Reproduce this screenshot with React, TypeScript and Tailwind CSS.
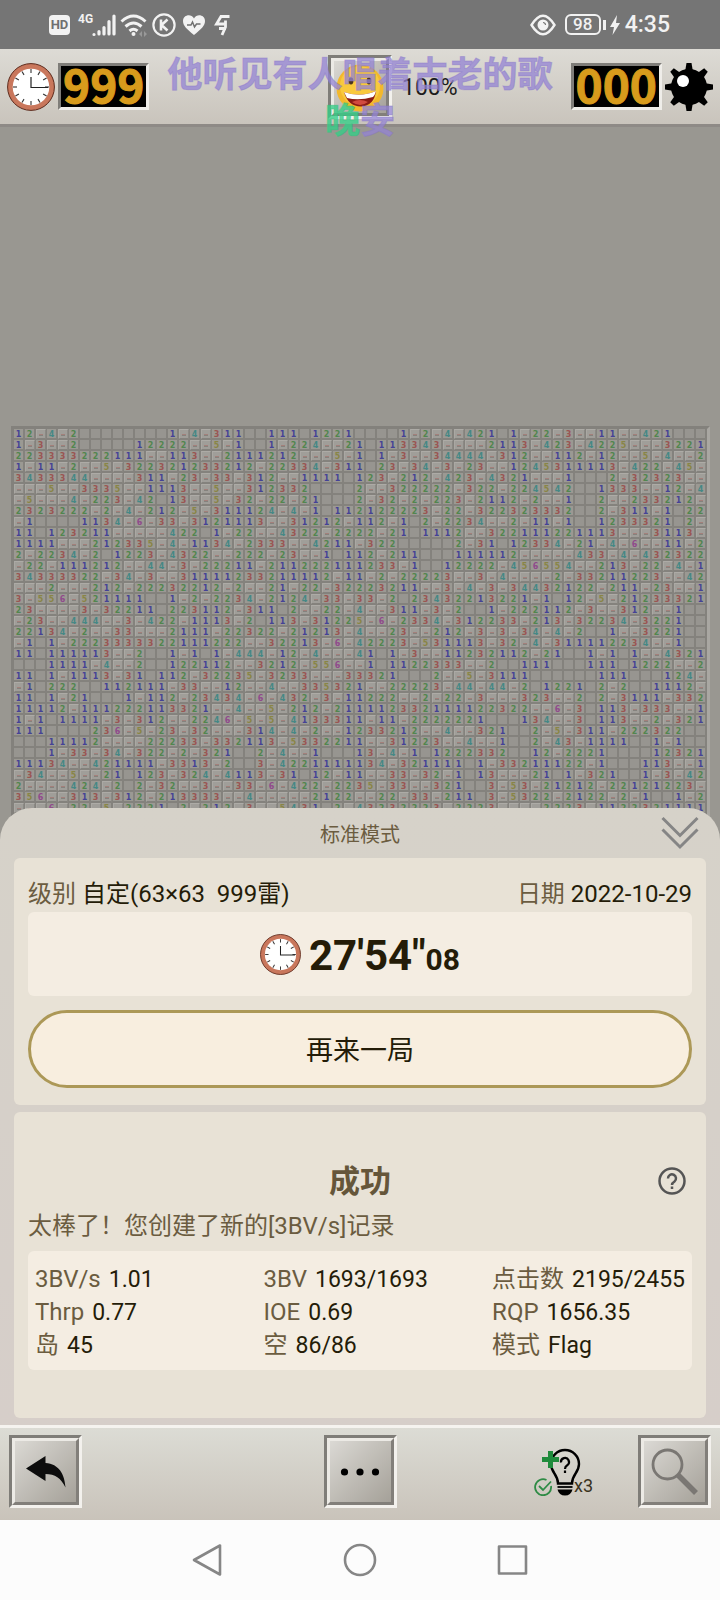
import type { ReactNode } from "react";

// "." opened blank, "f" flagged mine, digits are neighbour counts
const BOARD = [
  "12f4f2........1f4f311..111.1221....1f2f4f421.1f22f3ff11ff421...",
  "1f3ff2.....12222ff5f1..1f224ff21.113343ffff2113f423f4225fff3221",
  "223333222111ff113ff2111212fff5f1.1f3ff34444f312ff112f12ff5f4ff2",
  "1f11f2ff5f322321233212f22334f311.23f34f3f23ff1245311113f422f45f",
  "3433344ffff311f23f33f312ff1111.123f212f423f4321fff1...2f32323ff",
  "fff5ff3335ff1113ff5ff312332....2ff322222f322f224542..1333ff12f4",
  "f5fff4f223f42.13ff5f32f22f21...2f32f2f223f2112f2ff1..2ff233212f",
  "2323222f2f4f212f5f311124f4f1.112122223f22f322323332..2f311f1.22",
  "f1....1134f6f33f3121113ff31212f112f1.2f2234ff2f11f1..1233321.2f",
  "11.123211fffff422.1f22ff4322f2222f21.1112ff322111221113fff3113f",
  "1111fff212335f4f1134f2333ff4211f322.....2f31.12334f21f4f6ff11f2",
  "2f2234f2.1223f4322ff222f23ff1.112f211...111112fffff433f4f432322",
  "f22f111212ff44f3f22211f211222111233f1..12222f456554ff213f22f4f1",
  "34333322f34f3ff31111233211112f11f2f22223ff3f4ffff2f33211223ff42",
  "fff2fff212f22232212f2ff21f22f32223211ff3f4f3f34432122f211f23ff1",
  "3f556f521111..1f2f2234f2124f33f33f2.23432213221f1.12f5f21233321",
  "23ffff3f32211.223112f311.2ff22f4ff311f3f2..1f222112f3ff312ff1..",
  "f23ff444ff3f422f1113f2.113f31225f6f2334f312233f213f32234f3221..",
  "22134f2ff33fff2111f22322f21213f4ff23ff212f3f3f34f4f2..1ff3221..",
  "f1.1f2223333322111222ff32213f6f42223f531113f32f4f311112234ff1..",
  "11.111113ff2..1f1.1f444f12f4fff41.1f3ff11232112f21..1f1.1ff4321",
  "...1111f4ff2..122112ff3212f556ff1.1122333ff2..111...111.1222ff2",
  "11.1f1113f31.112f32235f3233fff33321...2ff5f3111......111...124f",
  "f1.222..112111f33ff12ff4ff335321ff22223f44f44f2.1221.2f2..1112f",
  "11.1f21...1f112f23434f6f432f3f11222ff2f22f3fff323ff2.2f3111f332",
  "11112f111222113321ff4ff5f212f211112332111122322ff6f3.113f333ff1",
  "1f1.1111f3f312ff2246f5f5f4133311f11f2222221...134ff3.113ff2f321",
  "111....236f5f23f32fff314f4f2ff1233212ff4ff321..2f5f311f222322..",
  "...11112ffff22233f332113f5332211ff31223ff4ff1..2f43f1111..1f1..",
  "...1f33f34f322f2f321..2f4ff1...13f4f1.1222332..12f2221....12321",
  "11134ff421111f3313f2..3f4221111134f321111.1f33211122f1...113ff1",
  "f34ff5ff21.123f324f4113f31.12f11ff33f32f1.13fff21.1f321..1f3f42",
  "2ffff424f2.2f32ff3ff33f6f422f2235f33ff321..3f53f21212f22121223f",
  "356ff313f312f213333ff4fffff2122ff22f33f211.3f5322f2122f2f1..1f2",
  "fff6f22f5f2221.2f212f3ff5431.2f43232223f2223ffff2223f1122321111",
];

const NUMBER_COLORS: Record<string, string> = {
  "1": "text-[#454296]",
  "2": "text-[#52864f]",
  "3": "text-[#9a5552]",
  "4": "text-[#458885]",
  "5": "text-[#898546]",
  "6": "text-[#904a8c]",
};

const STATS = [
  ["3BV/s", "1.01"],
  ["3BV", "1693/1693"],
  ["点击数", "2195/2455"],
  ["Thrp", "0.77"],
  ["IOE", "0.69"],
  ["RQP", "1656.35"],
  ["岛", "45"],
  ["空", "86/86"],
  ["模式", "Flag"],
];

const Cell = ({ value }: { value: string }) => {
  if (value === "f") {
    return (
      <span className="mr-px mb-px flex items-center justify-center border border-t-[#adaba6] border-r-[#8b8984] border-b-[#84827d] border-l-[#aaa8a3] bg-[#a09e99] pt-0.5">
        <span className="h-0.5 w-1 border-t border-t-[#a3807b] bg-[#84827d]" />
      </span>
    );
  }

  return (
    <span
      className={`mr-0.5 mb-0.5 text-center text-[8px] leading-[11px] ${
        value === "." ? "bg-[#979590]" : `bg-[#9b9993] ${NUMBER_COLORS[value]}`
      }`}
    >
      {value === "." ? "" : value}
    </span>
  );
};

const Board = () => (
  <div className="ml-[11px] mr-[10px] border-3 border-b-0 border-t-[#83817c] border-r-[#a9a7a2] border-l-[#83817c] bg-[#84827d] pb-5">
    {BOARD.map((row, y) => (
      <div
        key={y}
        className="grid grid-cols-[repeat(63,minmax(0,1fr))] grid-rows-[11px] font-['DejaVu_Sans',sans-serif] font-bold"
      >
        {row.split("").map((value, x) => (
          <Cell key={x} value={value} />
        ))}
      </div>
    ))}
  </div>
);

const Clock = ({ className }: { className: string }) => (
  <svg viewBox="0 0 48 48" className={className}>
    <circle cx="24" cy="24" r="23.4" fill="#c9775c" stroke="#5d2a1c" strokeWidth="1" />
    <circle cx="24" cy="24" r="18.3" fill="#fff" />
    {[0, 30, 60, 90, 120, 150, 180, 210, 240, 270, 300, 330].map((angle) => (
      <path key={angle} d="M24 6v4" stroke="#333" strokeWidth="1.1" transform={`rotate(${angle} 24 24)`} />
    ))}
    <path d="M24 14v10.5h17" fill="none" stroke="#222" strokeWidth="1.2" />
  </svg>
);

const Mine = () => (
  <svg viewBox="0 0 48 48" className="size-12">
    {[0, 45, 90, 135, 180, 225, 270, 315].map((angle) => (
      <path key={angle} d="M21.5 0h5l1.5 9h-8z" transform={`rotate(${angle} 24 24)`} />
    ))}
    <circle cx="24" cy="24" r="18" />
    <circle cx="18" cy="18" r="6" fill="#fff" />
  </svg>
);

const Face = () => (
  <svg viewBox="0 0 52 52" className="size-full">
    <circle cx="26" cy="27" r="23.5" fill="#f3b82c" />
    <circle cx="26" cy="25" r="20" fill="#fbd044" opacity=".7" />
    <ellipse cx="17" cy="20" rx="2.4" ry="3.4" fill="#4b3420" />
    <ellipse cx="35" cy="20" rx="2.4" ry="3.4" fill="#4b3420" />
    <path d="M10 31q16 6 32-1-2 15-15 15.500-13 0-17-14.500z" fill="#8c1c14" />
    <path d="M10 31q16 6 32-1-1 4-3 6-14 4-26 1z" fill="#fff" />
    <path d="M18 41q8-4 16 0-8 6-16 0z" fill="#d24a3f" />
  </svg>
);

const Counter = ({ value }: { value: string }) => (
  <div className="h-[47px] border-3 border-t-[#7f7d79] border-r-[#efede9] border-b-[#efede9] border-l-[#7f7d79] bg-black px-0.5 font-['Noto_Sans_CJK_SC',sans-serif] text-[46px] leading-[35px] font-bold text-[#d89b1c] [-webkit-text-stroke:1px_#d89b1c]">
    {value}
  </div>
);

type BevelButtonProps = {
  label: string;
  className: string;
  children: ReactNode;
};

const BevelButton = ({ label, className, children }: BevelButtonProps) => (
  <button
    aria-label={label}
    className={`border-3 border-t-[#7f7d78] border-r-[#f3f1ed] border-b-[#f3f1ed] border-l-[#7f7d78] ${className}`}
  >
    <span className="flex size-full items-center justify-center border-3 border-t-[#eceae5] border-r-[#827f7a] border-b-[#827f7a] border-l-[#eceae5] bg-linear-to-br from-[#dbd9d4] to-[#a5a199]">
      {children}
    </span>
  </button>
);

const StatusBar = () => (
  <div className="flex h-[49px] items-center justify-between bg-[#757575] pr-[50px] pl-[49px] text-[#f2f2f2]">
    <div className="flex items-center">
      <span className="flex h-5 w-[21px] items-center justify-center rounded-sm bg-[#f2f2f2] text-[13px] font-bold text-[#707070]">
        HD
      </span>
      <span className="ml-2 self-start text-xs leading-3 font-bold">4G</span>
      <svg viewBox="0 0 24 24" className="-ml-px size-6" fill="none" stroke="currentColor" strokeWidth="3.2" strokeLinecap="round">
        <path d="M2 21.500v0M7 21v-2.500M12 21v-6.500M17 21V8.500M22 21V3" />
      </svg>
      <svg viewBox="0 0 28 24" className="ml-1 h-6 w-7" fill="none" stroke="currentColor" strokeWidth="3">
        <path d="M1.500 8.500q12-11 24 0M5.500 13.500q8-7 16 0M9.500 18q4-3.500 8 0" />
        <circle cx="13.500" cy="21" r="2" fill="currentColor" stroke="none" />
        <path d="m22 18-3 3 3 3zM24 18l3 3-3 3z" fill="#999" stroke="none" />
      </svg>
      <svg viewBox="0 0 24 24" className="ml-1 size-6" fill="none" stroke="currentColor">
        <circle cx="12" cy="12" r="10.600" strokeWidth="2.200" />
        <path d="M9 6.500v11M15.500 6.500l-6 5.500 6 5.500" strokeWidth="2.600" />
      </svg>
      <svg viewBox="0 0 24 24" className="ml-1.5 size-6">
        <path d="M12 22C5 16 1 13 1 8c0-6 8-8 11-2.500C15 0 23 2 23 8c0 5-4 8-11 14z" fill="currentColor" />
        <path d="M5 12h4l1.500-3 2 5 2-3h4" fill="none" stroke="#707070" strokeWidth="1.500" />
      </svg>
      <svg viewBox="0 0 16 22" className="ml-2 h-[22px] w-4" fill="none" stroke="currentColor" strokeWidth="2.800">
        <path d="M15.500 2.500H7L2.500 10h9.500M11.500 6.500V13l-3.500 8M5 14.500h7" />
      </svg>
    </div>
    <div className="flex items-center">
      <svg viewBox="0 0 26 22" className="h-[22px] w-[26px]" fill="none" stroke="currentColor" strokeWidth="2.400">
        <path d="M1.500 11Q13-7.500 24.500 11 13 29.500 1.500 11z" />
        <circle cx="13" cy="11" r="5.500" fill="currentColor" stroke="none" />
        <path d="M13 8.500a2.500 2.500 0 0 1 2.500 2.500" stroke="#777" strokeWidth="1.200" />
      </svg>
      <span className="ml-[9px] flex h-[21px] w-9 items-center justify-center rounded-md border-2 text-[17px] font-medium">
        98
      </span>
      <span className="ml-0.5 h-2.5 w-[3px] bg-current" />
      <svg viewBox="0 0 10 20" className="ml-1 h-5 w-2.5" fill="currentColor">
        <path d="M7 0 0 12h4L2.500 20 10 8H6z" />
      </svg>
      <span className="ml-[5px] pt-0.5 text-[23px] font-medium">4:35</span>
    </div>
  </div>
);

const GameHeader = () => (
  <header className="relative grid h-[78px] grid-cols-[1fr_64px_1fr] items-center border-b-3 border-[#8e8a86] bg-linear-to-b from-[#dddbd5] to-[#c9c4bc] px-[7px]">
    <div className="flex items-center gap-[3px]">
      <Clock className="size-12" />
      <Counter value="999" />
    </div>
    <BevelButton label="新游戏" className="size-16">
      <Face />
    </BevelButton>
    <div className="flex items-center gap-[3px]">
      <span className="mr-auto pt-1 pl-2.5 text-[23px] text-[#1c1c1c]">100%</span>
      <Counter value="000" />
      <Mine />
    </div>

    {/* Floating lyrics */}
    <div className="pointer-events-none absolute inset-x-0 top-0 text-center font-['Noto_Sans_CJK_SC',sans-serif] text-[35px] leading-[46px] font-bold text-[#9484d4]/75 [-webkit-text-stroke:1px_#8573c866]">
      <p>他听见有人唱着古老的歌</p>
      <p>
        <span className="text-[#35cf88]/80 [-webkit-text-stroke:1px_#2fbf7a66]">晚</span>安
      </p>
    </div>
  </header>
);

const ResultSheet = () => (
  <section className="relative -mt-[26px] flex flex-col gap-[7px] rounded-t-[32px] bg-linear-to-b from-[#d6d2c9] to-[#d6cec9] px-3.5 pb-[7px] text-2xl leading-[33px] text-[#6b5c40]">
    <div className="-mb-[7px] flex h-[50px] items-center justify-center pt-1 text-xl">
      标准模式
      <button aria-label="收起" className="absolute top-2 right-[21px]">
        <svg viewBox="0 0 38 34" className="h-[34px] w-[38px]" fill="none" stroke="#858585" strokeWidth="3">
          <path d="m1.500 2 17.500 17.500L36.500 2M1.500 13.500 19 31l17.500-17.500" />
        </svg>
      </button>
    </div>

    <div className="flex flex-col rounded-md bg-[#e8e2d6] px-3.5 pt-5 pb-[17px]">
      <div className="mb-px flex justify-between">
        <p className="whitespace-pre">
          级别 <span className="text-[#241c08]">自定(63×63  999雷)</span>
        </p>
        <p>
          日期 <span className="text-[#241c08]">2022-10-29</span>
        </p>
      </div>
      <div className="mb-3.5 flex h-[84px] items-center justify-center gap-2 rounded-md bg-[#f4ede2] text-[#241c08]">
        <Clock className="size-[41px]" />
        <p className="pt-2 text-[42px] font-bold">
          27'54"<span className="text-3xl">08</span>
        </p>
      </div>
      <button className="h-[78px] rounded-full border-3 border-[#ac9857] bg-[#f8eedf] pt-1 text-[27px] text-[#241c08]">
        再来一局
      </button>
    </div>

    <div className="rounded-md bg-[#e8e2d6] px-3.5 pt-[52px] pb-12">
      <div className="relative flex h-[34px] items-center justify-center">
        <h2 className="text-[31px] font-bold text-[#65563a]">成功</h2>
        <button aria-label="帮助" className="absolute right-1.5">
          <svg viewBox="0 0 28 28" className="size-7" fill="none" stroke="#555" strokeWidth="2.500">
            <circle cx="14" cy="14" r="12.500" />
            <path d="M10 11.500a4 4 0 1 1 6.500 3Q14 16 14 18M14 19.500v2.500" />
          </svg>
        </button>
      </div>
      <p className="mt-3 mb-2">太棒了！您创建了新的[3BV/s]记录</p>
      <dl className="grid grid-cols-[1fr_1fr_auto] rounded-md bg-[#f4ede2] px-[7px] pt-3 pb-2">
        {STATS.map(([name, value]) => (
          <div key={name} className="flex gap-2">
            <dt>{name}</dt>
            <dd className="text-[23px] text-[#241c08]">{value}</dd>
          </div>
        ))}
      </dl>
    </div>
  </section>
);

const Toolbar = () => (
  <div className="grid h-[95px] grid-cols-[1fr_73px_1fr] items-start border-t-3 border-[#f5f3ef] bg-linear-to-b from-[#dcdcd5] to-[#c9c3ba] px-[9px] pt-[7px]">
    <BevelButton label="返回" className="size-[73px]">
      <svg viewBox="0 0 40 32" className="h-8 w-10" fill="#0d0d0d">
        <path d="M0 12.500 19.500 0v7C33 8 38.500 18 39.500 31.500 35 22 29 18 19.500 18v7z" />
      </svg>
    </BevelButton>
    <BevelButton label="更多" className="size-[73px]">
      <svg viewBox="0 0 40 8" className="h-2 w-10">
        <circle cx="4.500" cy="4" r="3.600" />
        <circle cx="20" cy="4" r="3.600" />
        <circle cx="35.500" cy="4" r="3.600" />
      </svg>
    </BevelButton>
    <div className="flex items-center justify-end">
      <button aria-label="提示" className="mr-[45px] flex items-end">
        <svg viewBox="0 0 48 48" className="size-12" fill="none">
          <path d="M24 35.500C24 26 17 25 17 16a14 14 0 0 1 28 0c0 9-7 10-7 19.500z" stroke="#000" strokeWidth="2.400" />
          <path d="M27 14.500a4 4 0 1 1 6.200 2.800Q31 18.500 31 21M31 22.500v2.500" stroke="#000" strokeWidth="2.200" />
          <path d="M23.500 39h15" stroke="#000" strokeWidth="1.800" />
          <path d="M23.500 41.500h15q-1.500 6-7.500 6t-7.500-6z" fill="#000" />
          <path d="M8 11.500h17M16.500 3v17" stroke="#1f8b3c" strokeWidth="5" />
          <path d="M17 38a8 8 0 1 1-4.500-6M5 38l4 4 8-8.500" stroke="#2e8b45" strokeWidth="1.800" />
        </svg>
        <span className="-ml-2 text-lg leading-5 text-[#3a3220]">x3</span>
      </button>
      <BevelButton label="放大镜" className="size-[73px]">
        <svg viewBox="0 0 48 48" className="size-12" fill="none" stroke="#7a7773">
          <circle cx="16.500" cy="16.500" r="14.500" strokeWidth="2.800" />
          <path d="m27 27 18 18" strokeWidth="5.500" />
        </svg>
      </BevelButton>
    </div>
  </div>
);

const NAV_ITEMS = [
  { label: "返回键", path: "M30 2.500v29L4 17z" },
  { label: "主屏幕", path: "M17 2a15 15 0 1 0 0 30 15 15 0 1 0 0-30z" },
  { label: "最近任务", path: "M3 3.500h27v27H3z" },
];

const NavBar = () => (
  <nav className="flex h-20 items-center justify-center gap-[119px] bg-[#fcfcfc]">
    {NAV_ITEMS.map(({ label, path }) => (
      <button key={label} aria-label={label}>
        <svg viewBox="0 0 34 34" className="size-[34px]" fill="none" stroke="#868686" strokeWidth="2.600" strokeLinejoin="round">
          <path d={path} />
        </svg>
      </button>
    ))}
  </nav>
);

export default function App() {
  return (
    <div className="flex min-h-screen flex-col bg-[#999791] font-[Roboto,'Noto_Sans_CJK_SC',sans-serif]">
      <StatusBar />
      <GameHeader />
      <main className="grow pt-[299px]">
        <Board />
        <ResultSheet />
      </main>
      <Toolbar />
      <NavBar />
    </div>
  );
}
